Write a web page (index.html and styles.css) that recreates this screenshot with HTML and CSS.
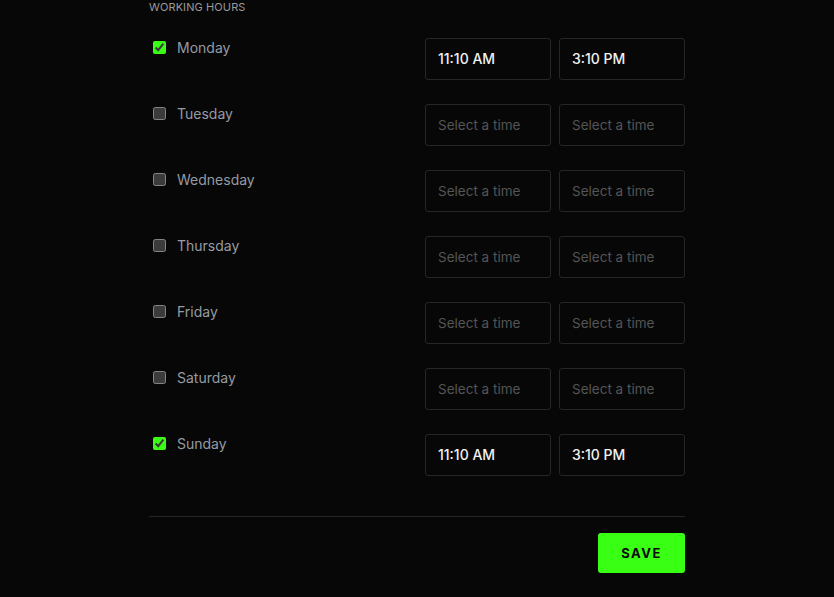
FILE: index.html
```html
<!DOCTYPE html>
<html lang="en">
<head>
<meta charset="utf-8">
<link rel="stylesheet" href="styles.css">
</head>
<body>
<main class="hours">
  <div class="section-title">WORKING HOURS</div>
  <div class="rows">
    <div class="row">
      <label class="day"><input type="checkbox" checked><span>Monday</span></label>
      <div class="times"><input class="time" type="text" value="11:10 AM" placeholder="Select a time"><input class="time" type="text" value="3:10 PM" placeholder="Select a time"></div>
    </div>
    <div class="row">
      <label class="day"><input type="checkbox"><span>Tuesday</span></label>
      <div class="times"><input class="time" type="text" placeholder="Select a time"><input class="time" type="text" placeholder="Select a time"></div>
    </div>
    <div class="row">
      <label class="day"><input type="checkbox"><span>Wednesday</span></label>
      <div class="times"><input class="time" type="text" placeholder="Select a time"><input class="time" type="text" placeholder="Select a time"></div>
    </div>
    <div class="row">
      <label class="day"><input type="checkbox"><span>Thursday</span></label>
      <div class="times"><input class="time" type="text" placeholder="Select a time"><input class="time" type="text" placeholder="Select a time"></div>
    </div>
    <div class="row">
      <label class="day"><input type="checkbox"><span>Friday</span></label>
      <div class="times"><input class="time" type="text" placeholder="Select a time"><input class="time" type="text" placeholder="Select a time"></div>
    </div>
    <div class="row">
      <label class="day"><input type="checkbox"><span>Saturday</span></label>
      <div class="times"><input class="time" type="text" placeholder="Select a time"><input class="time" type="text" placeholder="Select a time"></div>
    </div>
    <div class="row">
      <label class="day"><input type="checkbox" checked><span>Sunday</span></label>
      <div class="times"><input class="time" type="text" value="11:10 AM" placeholder="Select a time"><input class="time" type="text" value="3:10 PM" placeholder="Select a time"></div>
    </div>
  </div>
  <div class="footer">
    <button class="save" type="button">SAVE</button>
  </div>
</main>
</body>
</html>
```

FILE: styles.css
```css
html, body {
  margin: 0;
  padding: 0;
  background: #070707;
  color-scheme: dark;
}
body {
  font-family: Inter, "Noto Sans", sans-serif;
}
.hours {
  width: 536px;
  margin: 0 auto;
}
.section-title {
  font-size: 11px;
  line-height: 14px;
  color: #9a9a9a;
  letter-spacing: 0.1px;
}
.rows {
  display: flex;
  flex-direction: column;
  gap: 24px;
  margin-top: 24px;
}
.row {
  display: flex;
  justify-content: space-between;
  align-items: flex-start;
}
.day {
  display: flex;
  align-items: center;
  gap: 8px;
  height: 18px;
  font-size: 14px;
  color: #959ba3;
}
.day input {
  width: 13px;
  height: 13px;
  margin: 0 3px 0 4px;
  accent-color: #39ff14;
}
.times {
  display: flex;
  gap: 8px;
}
.time {
  box-sizing: border-box;
  width: 126px;
  height: 42px;
  padding: 0 12px 1px;
  background: #070707;
  border: 1px solid #262626;
  border-radius: 3px;
  font-family: inherit;
  font-size: 14px;
  font-weight: 500;
  color: #f2f2f2;
  outline: none;
}
.time::placeholder {
  color: #555555;
  font-weight: 400;
  font-size: 13.5px;
}
.footer {
  margin-top: 40px;
  border-top: 1px solid #262626;
  padding-top: 16px;
  display: flex;
  justify-content: flex-end;
}
.save {
  width: 87px;
  height: 40px;
  border: none;
  border-radius: 3px;
  background: #39ff14;
  color: #0a0a0a;
  font-family: inherit;
  font-size: 13px;
  font-weight: 700;
  letter-spacing: 1.5px;
  cursor: pointer;
}
```
